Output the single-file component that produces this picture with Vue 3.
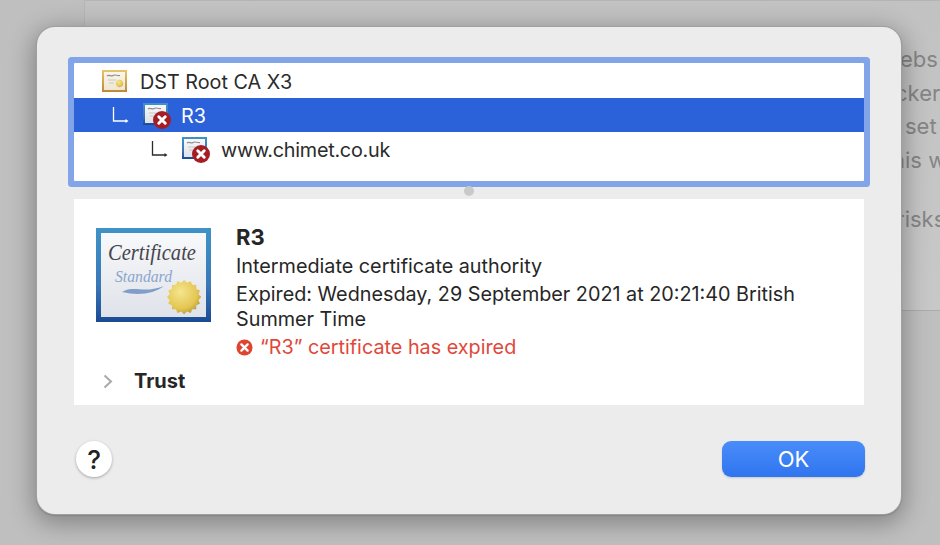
<template>
  <div class="screen">
    <svg width="0" height="0" class="defs">
      <defs>
        <linearGradient id="frame-blue" x1="0" y1="0" x2="0" y2="1">
          <stop offset="0" stop-color="#3f93c6" />
          <stop offset="0.6" stop-color="#3a78b8" />
          <stop offset="1" stop-color="#1b4a95" />
        </linearGradient>
        <linearGradient id="frame-gold" x1="0" y1="0" x2="0" y2="1">
          <stop offset="0" stop-color="#e6c76a" />
          <stop offset="1" stop-color="#bd873a" />
        </linearGradient>
        <linearGradient id="paper" x1="0" y1="0" x2="0" y2="1">
          <stop offset="0" stop-color="#f8f9fb" />
          <stop offset="1" stop-color="#dfe2e9" />
        </linearGradient>
        <linearGradient id="paper-warm" x1="0" y1="0" x2="0" y2="1">
          <stop offset="0" stop-color="#fbf6ea" />
          <stop offset="1" stop-color="#efe6d2" />
        </linearGradient>
        <radialGradient id="seal" cx="0.4" cy="0.35" r="0.75">
          <stop offset="0" stop-color="#f6e58f" />
          <stop offset="0.65" stop-color="#e4c651" />
          <stop offset="1" stop-color="#a98d3a" />
        </radialGradient>
        <polygon id="seal-shape" :points="sealPoints" fill="url(#seal)" />
        <g id="x-badge">
          <circle cx="9" cy="9" r="9" fill="#a51e23" />
          <path d="M5.8 5.8 L12.2 12.2 M12.2 5.8 L5.8 12.2" stroke="#fff" stroke-width="3" stroke-linecap="round" />
        </g>
      </defs>
    </svg>

    <div class="back-window">
      <p class="back-line ebs">ebs</p>
      <p class="back-line ckers">cker</p>
      <p class="back-line sets">set</p>
      <p class="back-line">his w</p>
      <p class="back-line risks">risks</p>
    </div>

    <div class="dialog">
      <div class="tree">
        <div
          v-for="row in rows"
          :key="row.name"
          class="tree-row"
          :class="[row.cls, { selected: row.selected }]"
        >
          <svg v-if="row.depth" class="elbow" width="17" height="18" viewBox="0 0 17 18">
            <path d="M1.5 1 V15 H14" fill="none" stroke="currentColor" stroke-width="1.3" />
            <path d="M13.5 13 L16.5 15 L13.5 17 Z" fill="currentColor" />
          </svg>
          <span class="mini-cert">
            <svg width="25" height="22" viewBox="0 0 25 22">
              <rect width="25" height="22" :fill="row.depth ? 'url(#frame-blue)' : 'url(#frame-gold)'" />
              <rect x="2" y="2" width="21" height="18" :fill="row.depth ? 'url(#paper)' : 'url(#paper-warm)'" />
              <path d="M5 6 C7 4 9 7 11 5.5 S15 6 18 5.5" fill="none" stroke="#8f8f8f" stroke-width="1.2" />
              <path d="M6 10 H14 M7 13 H12" stroke="#c6c6c6" stroke-width="1" />
              <use v-if="!row.depth" href="#seal-shape" transform="translate(13.5 9.5) scale(0.22)" />
            </svg>
            <svg v-if="row.depth" class="badge" width="18" height="18" viewBox="0 0 18 18">
              <use href="#x-badge" />
            </svg>
          </span>
          <span class="tree-name">{{ row.name }}</span>
        </div>
      </div>

      <div class="handle-bar"><span class="handle"></span></div>

      <div class="details">
        <div class="summary">
          <svg class="big-cert" width="115" height="94" viewBox="0 0 115 94">
            <rect width="115" height="94" fill="url(#frame-blue)" />
            <rect x="5" y="5" width="105" height="84" fill="url(#paper)" />
            <text x="12" y="32" textLength="88" lengthAdjust="spacingAndGlyphs" class="script-big">Certificate</text>
            <text x="19" y="54" textLength="57" lengthAdjust="spacingAndGlyphs" class="script-small">Standard</text>
            <path d="M26 64 C38 57 48 66 68 58 C58 66 42 68 26 64 Z" fill="#7f9fc8" />
            <use href="#seal-shape" transform="translate(71 52) scale(0.95)" />
          </svg>
          <div class="info">
            <h2 class="cert-title">R3</h2>
            <p class="info-line kind">Intermediate certificate authority</p>
            <p class="info-line expiry">Expired: Wednesday, 29 September 2021 at 20:21:40 British Summer Time</p>
            <p class="info-line problem">
              <svg width="17" height="17" viewBox="0 0 18 18">
                <circle cx="9" cy="9" r="8.5" fill="#e0432f" />
                <path d="M5.7 5.7 L12.3 12.3 M12.3 5.7 L5.7 12.3" stroke="#fff" stroke-width="2.5" stroke-linecap="round" />
              </svg>
              <span>“R3” certificate has expired</span>
            </p>
          </div>
        </div>
        <div class="trust">
          <svg width="10" height="15" viewBox="0 0 10 15">
            <path d="M1.5 1.5 L8 7.5 L1.5 13.5" fill="none" stroke="#a9a9a9" stroke-width="2" />
          </svg>
          <span>Trust</span>
        </div>
      </div>

      <div class="footer">
        <button class="help">?</button>
        <button class="ok">OK</button>
      </div>
    </div>
  </div>
</template>

<script setup>
const rows = [
  { name: 'DST Root CA X3', depth: 0, cls: 'root' },
  { name: 'R3', depth: 1, cls: 'mid', selected: true },
  { name: 'www.chimet.co.uk', depth: 2, cls: 'leaf' }
]

// scalloped gold seal for the certificate picture
const sealPoints = (() => {
  const pts = []
  const tips = 16
  for (let i = 0; i < tips * 2; i++) {
    const r = i % 2 === 0 ? 18 : 15.5
    const a = (Math.PI * i) / tips
    pts.push(`${(18 + r * Math.cos(a)).toFixed(2)},${(18 + r * Math.sin(a)).toFixed(2)}`)
  }
  return pts.join(' ')
})()
</script>

<style>
html,
body {
  margin: 0;
  background: #bdbdbd;
}
</style>

<style scoped>
.screen {
  position: relative;
  width: 940px;
  height: 545px;
  overflow: hidden;
  font-family: Inter, 'Liberation Sans', sans-serif;
  background: #bfbfbf;
}

.defs {
  position: absolute;
}

.back-window {
  margin-left: 84px;
  height: 311px;
  box-sizing: border-box;
  padding: 42px 0 0 807px;
  background: linear-gradient(180deg, #c2c2c2, #c8c8c8);
  border-top: 1px solid #b4b4b4;
  border-left: 1px solid #b6b6b6;
  border-bottom: 1px solid #acacac;
  overflow: hidden;
}

.back-line {
  margin: 0;
  height: 33.5px;
  line-height: 33.5px;
  font-size: 22px;
  color: #858585;
  white-space: nowrap;
}

.ebs {
  padding-left: 8px;
}

.ckers {
  padding-left: 3px;
}

.sets {
  padding-left: 13px;
}

.risks {
  margin-top: 26px;
  padding-left: 4px;
}

.dialog {
  position: absolute;
  left: 37px;
  top: 27px;
  width: 864px;
  height: 487px;
  box-sizing: border-box;
  padding: 36px 31px 0;
  background: #ececec;
  border-radius: 18px;
  box-shadow:
    0 0 0 1px #a0a0a0,
    0 1px 1px 1px #848484,
    0 6px 24px 4px rgba(0, 0, 0, 0.3);
}

.tree {
  margin: 0 6px;
  height: 118px;
  background: #fff;
  border-radius: 1px;
  box-shadow: 0 0 0 6px #82a4e8;
  font-size: 19.8px;
  color: #2b2b2b;
}

.tree-row {
  display: flex;
  align-items: center;
  height: 34px;
}

.tree-row.selected {
  background: #2b62d9;
  color: #fff;
}

.tree-name {
  padding-top: 2px;
}

.root {
  height: 35px;
  padding-left: 28px;
}

.mid {
  padding-left: 38px;
}

.leaf {
  padding-left: 77px;
}

.leaf .tree-name {
  margin-left: 1px;
  letter-spacing: -0.25px;
}

.elbow {
  margin-right: 14px;
}

.mini-cert {
  position: relative;
  width: 25px;
  height: 22px;
  margin-right: 13px;
}

.mid .mini-cert,
.leaf .mini-cert {
  margin-top: -2px;
}

.mini-cert svg {
  display: block;
}

.badge {
  position: absolute;
  left: 10px;
  top: 8px;
}

.handle-bar {
  height: 18px;
  display: flex;
  align-items: center;
  justify-content: center;
}

.handle {
  width: 10px;
  height: 10px;
  margin-top: 1px;
  border-radius: 50%;
  background: #c9c9c9;
}

.details {
  margin: 0 6px;
  height: 206px;
  box-sizing: border-box;
  padding: 29px 22px 0;
  background: #fff;
  color: #262626;
}

.summary {
  display: flex;
  gap: 25px;
}

.big-cert {
  flex: none;
}

.script-big {
  font-family: 'Liberation Serif', serif;
  font-style: italic;
  font-size: 24px;
  fill: #45454d;
}

.script-small {
  font-family: 'Liberation Serif', serif;
  font-style: italic;
  font-size: 16px;
  fill: #8aa6cc;
}

.info {
  width: 590px;
}

.cert-title {
  margin: -4px 0 0;
  font-size: 22px;
  line-height: 26px;
  font-weight: 700;
}

.info-line {
  margin: 0;
  font-size: 19.8px;
  line-height: 25px;
}

.kind {
  margin-top: 4px;
}

.expiry {
  margin-top: 3px;
}

.problem {
  display: flex;
  align-items: center;
  gap: 7px;
  margin-top: 3px;
  color: #e0483a;
}

.trust {
  display: flex;
  align-items: center;
  gap: 21px;
  margin-top: 9px;
  padding-left: 7px;
  font-size: 20px;
  font-weight: 700;
}

.footer {
  display: flex;
  justify-content: space-between;
  align-items: center;
  margin-top: 36px;
  padding: 0 5px 0 8px;
}

.help {
  width: 36px;
  height: 36px;
  padding: 0;
  border: none;
  border-radius: 50%;
  background: #fff;
  box-shadow: 0 1px 3px rgba(0, 0, 0, 0.3);
  font-family: inherit;
  font-size: 26px;
  font-weight: 500;
  color: #222;
}

.ok {
  width: 143px;
  height: 36px;
  padding: 0;
  border: none;
  border-radius: 9px;
  background: linear-gradient(180deg, #4a8cfa, #2f75ef);
  box-shadow: 0 1px 2px rgba(0, 0, 0, 0.15);
  font-family: inherit;
  font-size: 22px;
  color: #fff;
}
</style>
